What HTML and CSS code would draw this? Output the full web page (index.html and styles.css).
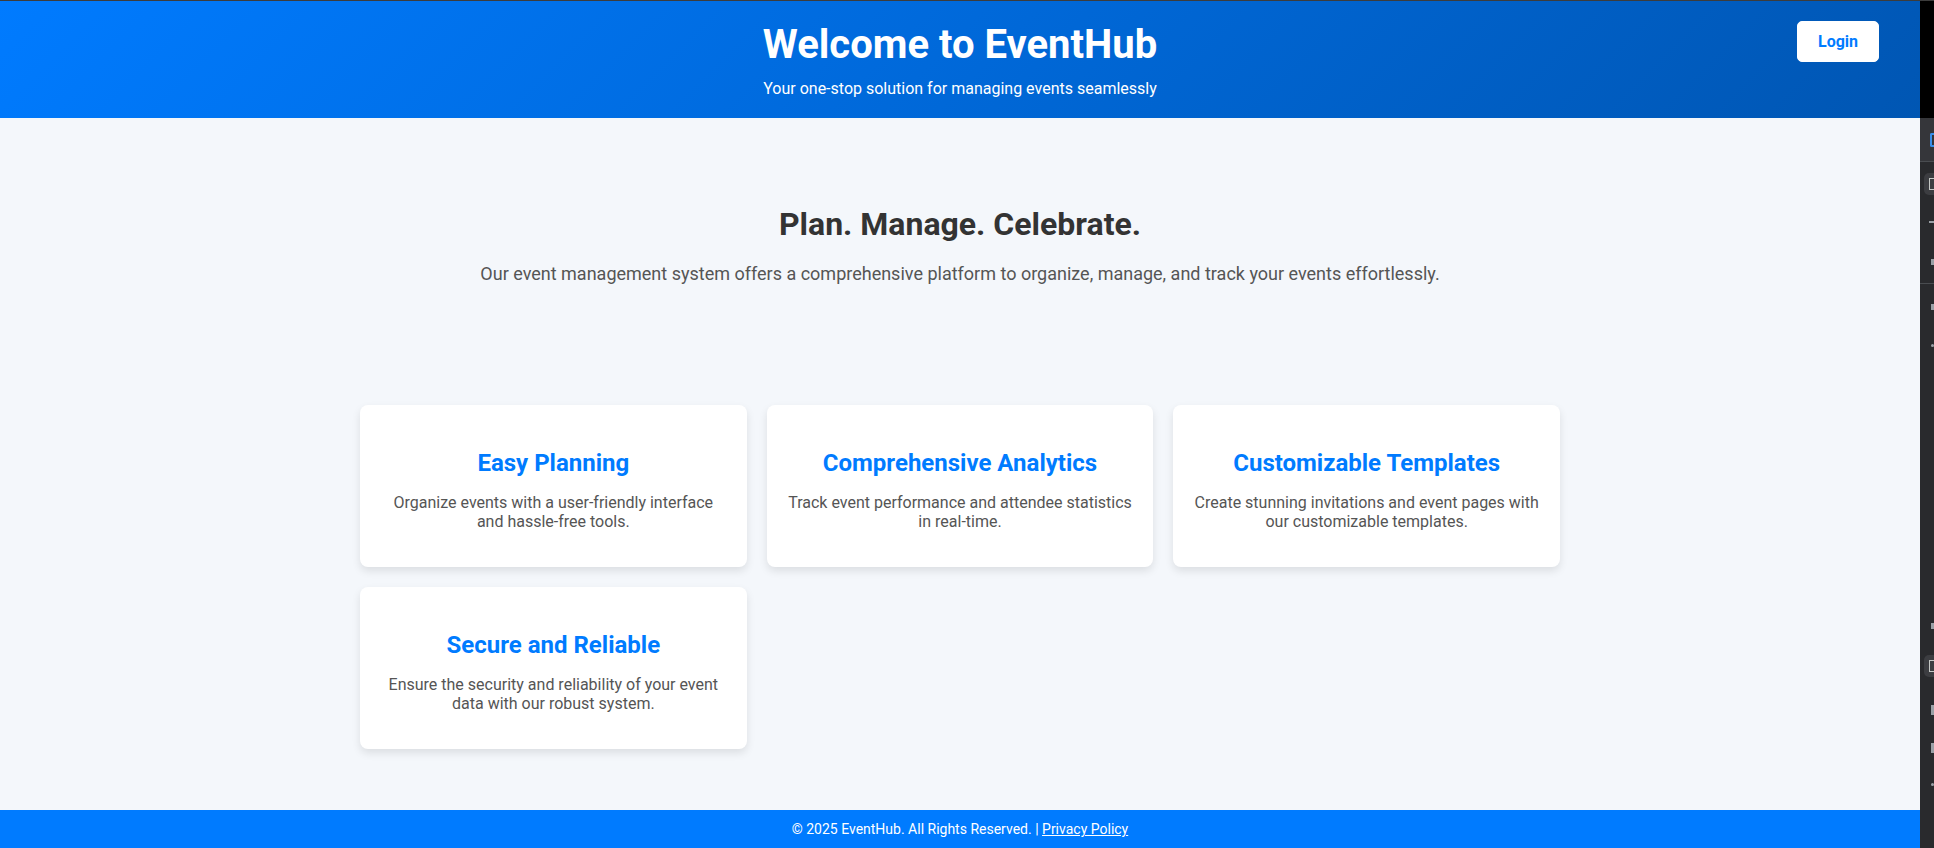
FILE: index.html
```html
<!DOCTYPE html>
<html lang="en">
<head>
<meta charset="UTF-8">
<title>EventHub</title>
<link rel="stylesheet" href="styles.css">
</head>
<body>
<div class="frame">
  <div class="page">
    <header class="site-header">
      <h1>Welcome to EventHub</h1>
      <p>Your one-stop solution for managing events seamlessly</p>
      <a class="login-btn" href="#">Login</a>
    </header>
    <main class="main">
      <section class="hero">
        <h2>Plan. Manage. Celebrate.</h2>
        <p>Our event management system offers a comprehensive platform to organize, manage, and track your events effortlessly.</p>
      </section>
      <section class="features">
        <div class="feature-grid">
          <div class="card">
            <h3>Easy Planning</h3>
            <p>Organize events with a user-friendly interface and hassle-free tools.</p>
          </div>
          <div class="card">
            <h3>Comprehensive Analytics</h3>
            <p>Track event performance and attendee statistics in real-time.</p>
          </div>
          <div class="card">
            <h3>Customizable Templates</h3>
            <p>Create stunning invitations and event pages with our customizable templates.</p>
          </div>
          <div class="card">
            <h3>Secure and Reliable</h3>
            <p>Ensure the security and reliability of your event data with our robust system.</p>
          </div>
        </div>
      </section>
    </main>
    <footer class="site-footer">
      &copy; 2025 EventHub. All Rights Reserved. | <a href="#">Privacy Policy</a>
    </footer>
  </div>
  <aside class="devtools">
    <div class="dt-top"></div>
    <div class="dt-bar"><span class="dt-blue"></span></div>
    <div class="dt-panel">
      <span class="dt-box dt-box1"></span>
      <span class="dt-mark dt-m1"></span>
      <span class="dt-mark dt-m2"></span>
      <span class="dt-sep"></span>
      <span class="dt-mark dt-m3"></span>
      <span class="dt-mark dt-m4"></span>
      <span class="dt-mark dt-m5"></span>
      <span class="dt-box dt-box2"></span>
      <span class="dt-mark dt-m6"></span>
      <span class="dt-mark dt-m7"></span>
      <span class="dt-mark dt-m8"></span>
    </div>
  </aside>
</div>
</body>
</html>
```

FILE: styles.css
```css
* { box-sizing: border-box; }

html, body {
  margin: 0;
  padding: 0;
}

body {
  font-family: Roboto, "Liberation Sans", Arial, sans-serif;
  background: #f4f7fb;
  color: #333;
  overflow: hidden;
}

.frame {
  display: flex;
  width: 1934px;
  height: 848px;
  border-top: 1px solid #3c3c3c;
}

.page {
  width: 1920px;
  flex: 0 0 1920px;
  display: flex;
  flex-direction: column;
  height: 847px;
  background: #f4f7fb;
}

.site-header {
  position: relative;
  background: linear-gradient(135deg, #007bff, #0056b3);
  color: #fff;
  text-align: center;
  padding: 20px;
}

.site-header h1 {
  margin: 0;
  font-size: 40px;
  font-weight: 700;
}

.site-header p {
  margin: 11px 0 0;
  font-size: 16px;
}

.login-btn {
  position: absolute;
  top: 20px;
  right: 41px;
  background: #fff;
  color: #007bff;
  font-size: 16px;
  font-weight: 700;
  text-decoration: none;
  padding: 10px 20px;
  border: 1px solid #fff;
  border-radius: 5px;
}

.main {
  flex: 1;
}

.hero {
  text-align: center;
  padding: 60px 20px 60px;
}

.hero h2 {
  font-size: 32px;
  font-weight: 700;
  color: #333;
  margin: 27px 0 20px;
}

.hero p {
  font-size: 18px;
  color: #555;
  margin: 0 0 18px;
}

.features {
  padding: 43px 20px 40px;
}

.feature-grid {
  max-width: 1200px;
  margin: 0 auto;
  display: grid;
  grid-template-columns: repeat(3, 1fr);
  gap: 20px;
}

.card {
  background: #fff;
  border-radius: 8px;
  box-shadow: 0 4px 8px rgba(0, 0, 0, 0.1);
  padding: 20px;
  text-align: center;
}

.card h3 {
  font-size: 24px;
  font-weight: 700;
  color: #007bff;
  margin: 24px 0 10px;
}

.card p {
  font-size: 16px;
  color: #555;
  margin: 16px 0;
}

.site-footer {
  background: #007bff;
  color: #fff;
  text-align: center;
  font-size: 14px;
  padding: 11px 20px;
}

.site-footer a {
  color: #fff;
  text-decoration: underline;
}

/* devtools strip at the right edge */
.devtools {
  flex: 0 0 14px;
  width: 14px;
  display: flex;
  flex-direction: column;
  background: #292a2d;
}

.dt-top {
  flex: 0 0 117px;
  background: #000;
}

.dt-bar {
  flex: 0 0 44px;
  background: #35363a;
  border-bottom: 1px solid #494c50;
  display: flex;
  align-items: center;
  justify-content: flex-end;
}

.dt-blue {
  width: 4px;
  height: 14px;
  border: 2px solid #3b8eea;
  border-right: none;
  border-radius: 2px 0 0 2px;
}

.dt-panel {
  flex: 1;
  display: flex;
  flex-direction: column;
  align-items: flex-end;
}

.dt-box {
  width: 10px;
  height: 22px;
  border-radius: 5px 0 0 5px;
  background: #3c3d41;
  display: flex;
  align-items: center;
  justify-content: flex-end;
}

.dt-box::after {
  content: "";
  width: 4px;
  height: 10px;
  border: 1.5px solid #c4c7c5;
  border-right: none;
}

.dt-box1 { margin-top: 11px; }

.dt-mark {
  width: 3px;
  height: 6px;
  background: #9aa0a6;
  margin-right: 0;
}

.dt-m1 { margin-top: 26px; width: 5px; height: 2px; }
.dt-m2 { margin-top: 36px; }
.dt-sep { margin-top: 18px; width: 14px; height: 1px; background: #494c50; }
.dt-m3 { margin-top: 20px; }
.dt-m4 { margin-top: 34px; width: 3px; height: 3px; border-radius: 50%; }
.dt-m5 { margin-top: 276px; }
.dt-box2 { margin-top: 26px; }
.dt-m6 { margin-top: 28px; height: 10px; }
.dt-m7 { margin-top: 28px; height: 10px; }
.dt-m8 { margin-top: 30px; height: 3px; border-radius: 50%; }
```
